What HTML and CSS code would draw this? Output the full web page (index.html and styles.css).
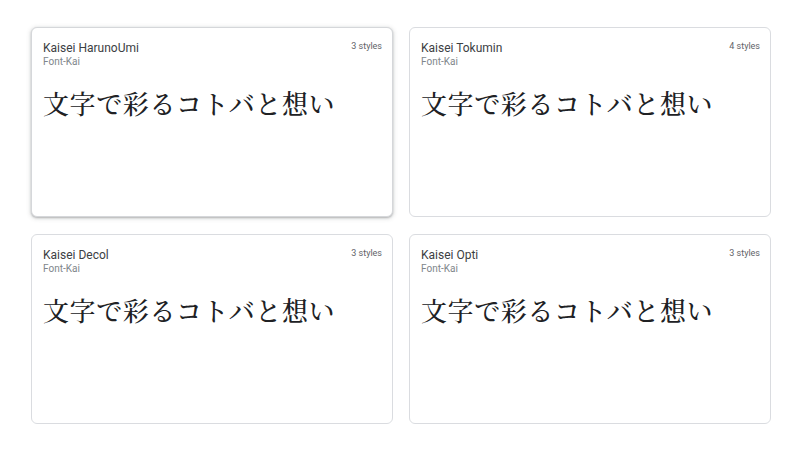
FILE: index.html
```
<!DOCTYPE html>
<html lang="ja">
<head>
<meta charset="utf-8">
<link rel="stylesheet" href="styles.css">
</head>
<body>
<div class="grid">
  <div class="card card-hover">
    <div class="head"><span class="name">Kaisei HarunoUmi</span><span class="styles">3 styles</span></div>
    <div class="cat">Font-Kai</div>
    <div class="sample">文字で彩るコトバと想い</div>
  </div>
  <div class="card">
    <div class="head"><span class="name">Kaisei Tokumin</span><span class="styles">4 styles</span></div>
    <div class="cat">Font-Kai</div>
    <div class="sample">文字で彩るコトバと想い</div>
  </div>
  <div class="card">
    <div class="head"><span class="name">Kaisei Decol</span><span class="styles">3 styles</span></div>
    <div class="cat">Font-Kai</div>
    <div class="sample">文字で彩るコトバと想い</div>
  </div>
  <div class="card">
    <div class="head"><span class="name">Kaisei Opti</span><span class="styles">3 styles</span></div>
    <div class="cat">Font-Kai</div>
    <div class="sample">文字で彩るコトバと想い</div>
  </div>
</div>
</body>
</html>
```
FILE: styles.css
```
html, body {
  margin: 0;
  background: #ffffff;
}
body {
  font-family: Roboto, "Noto Sans", "Liberation Sans", sans-serif;
}
.grid {
  display: grid;
  grid-template-columns: 362px 362px;
  grid-auto-rows: 190px;
  column-gap: 16px;
  row-gap: 17px;
  padding: 27px 0 0 31px;
}
.card {
  box-sizing: border-box;
  border: 1px solid #dadce0;
  border-radius: 6px;
  padding: 12px 10px 0 11px;
  background: #fff;
}
.card-hover {
  border-color: #d5d7da;
  box-shadow: 0 1px 2px rgba(60,64,67,0.3), 0 1px 4px 1px rgba(60,64,67,0.15);
}
.head {
  display: flex;
  justify-content: space-between;
  align-items: flex-start;
  height: 16px;
}
.name {
  font-size: 12px;
  line-height: 16px;
  color: #3c4043;
}
.styles {
  font-size: 9px;
  line-height: 12px;
  color: #5f6368;
}
.cat {
  font-size: 10px;
  line-height: 12px;
  color: #80868b;
}
.sample {
  margin-top: 18px;
  font-family: "Noto Serif CJK JP", "IPAexMincho", "IPAMincho", "Noto Sans CJK JP", serif;
  font-size: 26px;
  font-weight: 500;
  line-height: 34px;
  letter-spacing: 0.6px;
  color: #202124;
  white-space: nowrap;
}
```
